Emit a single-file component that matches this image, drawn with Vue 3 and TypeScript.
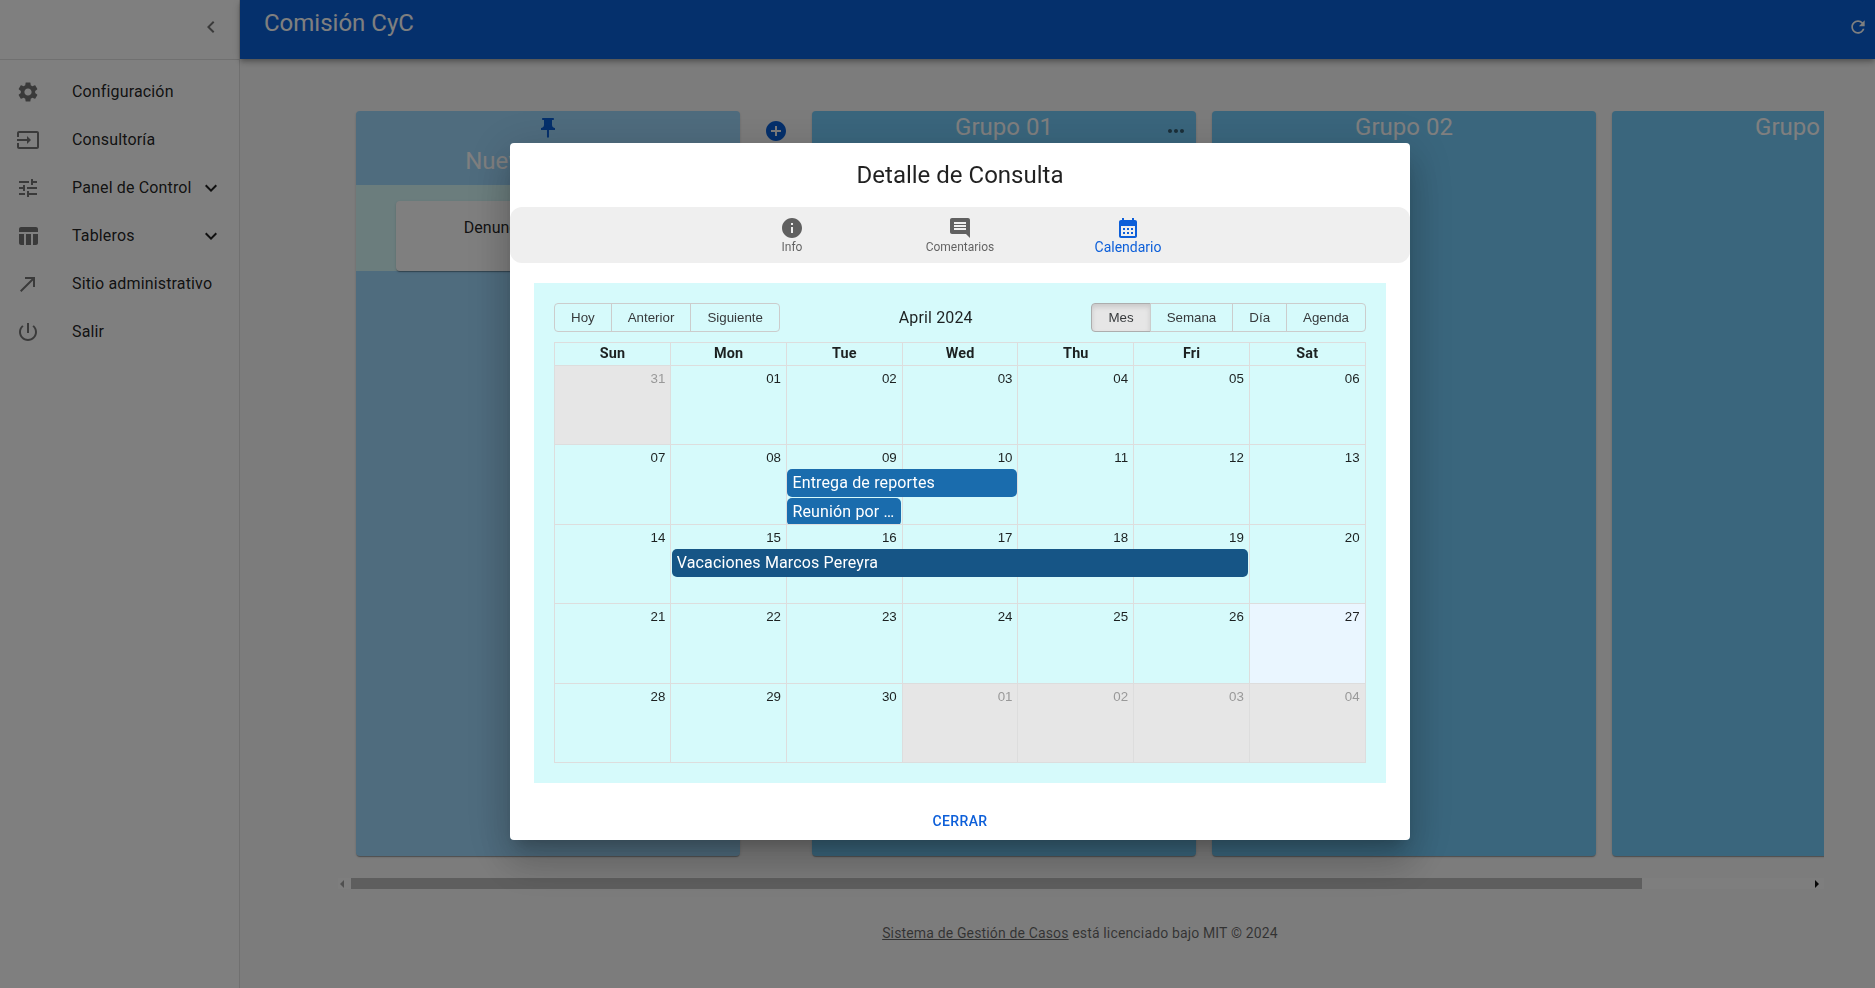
<script setup lang="ts">
import { computed } from 'vue'

const P = {
  settings: 'M19.14 12.94c.04-.3.06-.61.06-.94 0-.32-.02-.64-.07-.94l2.03-1.58c.18-.14.23-.41.12-.61l-1.92-3.32c-.12-.22-.37-.29-.59-.22l-2.39.96c-.5-.38-1.03-.7-1.62-.94l-.36-2.54c-.04-.24-.24-.41-.48-.41h-3.84c-.24 0-.43.17-.47.41l-.36 2.54c-.59.24-1.13.57-1.62.94l-2.39-.96c-.22-.08-.47 0-.59.22L2.74 8.87c-.12.21-.08.47.12.61l2.03 1.58c-.05.3-.09.63-.09.94s.02.64.07.94l-2.03 1.58c-.18.14-.23.41-.12.61l1.92 3.32c.12.22.37.29.59.22l2.39-.96c.5.38 1.03.7 1.62.94l.36 2.54c.05.24.24.41.48.41h3.84c.24 0 .44-.17.47-.41l.36-2.54c.59-.24 1.13-.56 1.62-.94l2.39.96c.22.08.47 0 .59-.22l1.92-3.32c.12-.22.07-.47-.12-.61l-2.01-1.58zM12 15.6c-1.98 0-3.6-1.62-3.6-3.6s1.62-3.6 3.6-3.6 3.6 1.62 3.6 3.6-1.62 3.6-3.6 3.6z',
  input: 'M21 3.01H3c-1.1 0-2 .9-2 2V9h2V4.99h18v14.03H3V15H1v4.01c0 1.1.9 1.98 2 1.98h18c1.1 0 2-.88 2-1.98v-14c0-1.11-.9-2-2-2zM11 16l4-4-4-4v3H1v2h10v3z',
  tune: 'M3 17v2h6v-2H3zM3 5v2h10V5H3zm10 16v-2h8v-2h-8v-2h-2v6h2zM7 9v2H3v2h4v2h2V9H7zm14 4v-2H11v2h10zm-6-4h2V7h4V5h-4V3h-2v6z',
  table: 'M10 10.02h5V21h-5zM17 21h3c1.1 0 2-.9 2-2v-9h-5v11zm3-18H5c-1.1 0-2 .9-2 2v3h19V5c0-1.1-.9-2-2-2zM3 19c0 1.1.9 2 2 2h3V10H3v9z',
  callMade: 'M9 5v2h6.59L4 18.59 5.41 20 17 8.41V15h2V5z',
  power: 'M13 3h-2v10h2V3zm4.83 2.17l-1.42 1.42C17.99 7.86 19 9.81 19 12c0 3.87-3.13 7-7 7s-7-3.13-7-7c0-2.19 1.01-4.14 2.58-5.42L6.17 5.17C4.23 6.82 3 9.26 3 12c0 4.97 4.03 9 9 9s9-4.03 9-9c0-2.74-1.23-5.18-3.17-6.83z',
  expand: 'M16.59 8.59L12 13.17 7.41 8.59 6 10l6 6 6-6z',
  chevronLeft: 'M15.41 7.41L14 6l-6 6 6 6 1.41-1.41L10.83 12z',
  refresh: 'M17.65 6.35C16.2 4.9 14.21 4 12 4c-4.42 0-7.99 3.58-7.99 8s3.57 8 7.99 8c3.73 0 6.84-2.55 7.73-6h-2.08c-.82 2.33-3.04 4-5.65 4-3.31 0-6-2.69-6-6s2.69-6 6-6c1.66 0 3.14.69 4.22 1.78L13 11h7V4l-2.35 2.35z',
  info: 'M12 2C6.48 2 2 6.48 2 12s4.48 10 10 10 10-4.48 10-10S17.52 2 12 2zm1 15h-2v-6h2v6zm0-8h-2V7h2v2z',
  chat: 'M21.99 4c0-1.1-.89-2-1.99-2H4c-1.1 0-2 .9-2 2v12c0 1.1.9 2 2 2h14l4 4-.01-18zM18 14H6v-2h12v2zm0-3H6V9h12v2zm0-3H6V6h12v2z',
  calendar: 'M19 4h-1V2h-2v2H8V2H6v2H5c-1.11 0-1.99.9-1.99 2L3 20c0 1.1.89 2 2 2h14c1.1 0 2-.9 2-2V6c0-1.1-.9-2-2-2zm0 16H5V10h14v10zM9 14H7v-2h2v2zm4 0h-2v-2h2v2zm4 0h-2v-2h2v2zm-8 4H7v-2h2v2zm4 0h-2v-2h2v2zm4 0h-2v-2h2v2z',
  pin: 'M16 9V4h1c.55 0 1-.45 1-1s-.45-1-1-1H7c-.55 0-1 .45-1 1s.45 1 1 1h1v5c0 1.66-1.34 3-3 3v2h5.97v7l1 1 1-1v-7H19v-2c-1.66 0-3-1.34-3-3z',
  add: 'M12 2C6.48 2 2 6.48 2 12s4.48 10 10 10 10-4.48 10-10S17.52 2 12 2zm5 11h-4v4h-2v-4H7v-2h4V7h2v4h4v2z',
  more: 'M6 10c-1.1 0-2 .9-2 2s.9 2 2 2 2-.9 2-2-.9-2-2-2zm12 0c-1.1 0-2 .9-2 2s.9 2 2 2 2-.9 2-2-.9-2-2-2zm-6 0c-1.1 0-2 .9-2 2s.9 2 2 2 2-.9 2-2-.9-2-2-2z',
}

interface NavItem { label: string; icon: string; expandable?: boolean }
const nav: NavItem[] = [
  { label: 'Configuración', icon: P.settings },
  { label: 'Consultoría', icon: P.input },
  { label: 'Panel de Control', icon: P.tune, expandable: true },
  { label: 'Tableros', icon: P.table, expandable: true },
  { label: 'Sitio administrativo', icon: P.callMade },
  { label: 'Salir', icon: P.power },
]

const tabs = [
  { label: 'Info', icon: P.info, active: false },
  { label: 'Comentarios', icon: P.chat, active: false },
  { label: 'Calendario', icon: P.calendar, active: true },
]

const groups = [{ name: 'Grupo 01', more: true }, { name: 'Grupo 02', more: false }, { name: 'Grupo 03', more: false }]

const weekdays = ['Sun', 'Mon', 'Tue', 'Wed', 'Thu', 'Fri', 'Sat']

interface Day { n: string; off: boolean; today: boolean }
interface CalEvent { title: string; col: number; span: number; row: number; dark?: boolean }
interface Week { days: Day[]; events: CalEvent[] }

const pad = (n: number) => String(n).padStart(2, '0')
const weeks = computed<Week[]>(() => {
  const out: Week[] = []
  for (let w = 0; w < 5; w++) {
    const days: Day[] = []
    for (let d = 0; d < 7; d++) {
      const i = w * 7 + d
      const off = i === 0 || i > 30
      const num = i === 0 ? 31 : i > 30 ? i - 30 : i
      days.push({ n: pad(num), off, today: i === 27 })
    }
    out.push({ days, events: [] })
  }
  out[1].events.push({ title: 'Entrega de reportes', col: 3, span: 2, row: 2 })
  out[1].events.push({ title: 'Reunión por videollamada', col: 3, span: 1, row: 3 })
  out[2].events.push({ title: 'Vacaciones Marcos Pereyra', col: 2, span: 5, row: 2, dark: true })
  return out
})
</script>

<template>
  <div class="app">
    <aside class="sidebar">
      <div class="side-top">
        <svg class="ico chev" viewBox="0 0 24 24"><path :d="P.chevronLeft" /></svg>
      </div>
      <ul class="nav">
        <li v-for="item in nav" :key="item.label" class="nav-item">
          <svg class="ico nav-ico" viewBox="0 0 24 24"><path :d="item.icon" /></svg>
          <span class="nav-label">{{ item.label }}</span>
          <svg v-if="item.expandable" class="ico nav-exp" viewBox="0 0 24 24"><path :d="P.expand" /></svg>
        </li>
      </ul>
    </aside>

    <div class="main">
      <header class="topbar">
        <h1 class="brand">Comisión CyC</h1>
        <svg class="ico refresh" viewBox="0 0 24 24"><path :d="P.refresh" /></svg>
      </header>

      <div class="content">
        <div class="board">
          <section class="column first">
            <svg class="ico pin" viewBox="0 0 24 24"><path :d="P.pin" /></svg>
            <h2 class="col-title first-title">Nuevas Causas</h2>
            <div class="strip">
              <div class="card">Denuncia de corrupción</div>
            </div>
          </section>
          <div class="add-slot">
            <svg class="ico add" viewBox="0 0 24 24"><path :d="P.add" /></svg>
          </div>
          <section v-for="g in groups" :key="g.name" class="column">
            <h2 class="col-title">{{ g.name }}</h2>
            <svg v-if="g.more" class="ico more" viewBox="0 0 24 24"><path :d="P.more" /></svg>
          </section>
        </div>

        <div class="scrollbar">
          <span class="arrow left"></span>
          <span class="thumb"></span>
          <span class="arrow right"></span>
        </div>

        <footer class="foot"><a class="foot-link">Sistema de Gestión de Casos</a> está licenciado bajo MIT © 2024</footer>
      </div>
    </div>

    <div class="scrim">
      <div class="dialog">
        <h2 class="dlg-title">Detalle de Consulta</h2>
        <nav class="tabs">
          <div v-for="t in tabs" :key="t.label" class="tab" :class="{ active: t.active }">
            <svg class="ico tab-ico" viewBox="0 0 24 24"><path :d="t.icon" /></svg>
            <span class="tab-label">{{ t.label }}</span>
          </div>
        </nav>

        <div class="panel">
          <div class="toolbar">
            <div class="btn-group">
              <button class="tb-btn">Hoy</button>
              <button class="tb-btn">Anterior</button>
              <button class="tb-btn">Siguiente</button>
            </div>
            <span class="tb-label">April 2024</span>
            <div class="btn-group">
              <button class="tb-btn on">Mes</button>
              <button class="tb-btn">Semana</button>
              <button class="tb-btn">Día</button>
              <button class="tb-btn">Agenda</button>
            </div>
          </div>

          <div class="month">
            <div class="head-row">
              <div v-for="d in weekdays" :key="d" class="head-cell">{{ d }}</div>
            </div>
            <div v-for="(w, wi) in weeks" :key="wi" class="week">
              <div
                v-for="(d, di) in w.days"
                :key="di"
                class="day"
                :class="{ off: d.off, today: d.today }"
                :style="{ gridColumn: di + 1 }"
              >
                <span class="day-num">{{ d.n }}</span>
              </div>
              <div
                v-for="e in w.events"
                :key="e.title"
                class="event"
                :class="{ dark: e.dark }"
                :style="{ gridColumn: `${e.col} / span ${e.span}`, gridRow: e.row }"
              >
                {{ e.title }}
              </div>
            </div>
          </div>
        </div>

        <div class="actions">
          <button class="close">CERRAR</button>
        </div>
      </div>
    </div>
  </div>
</template>

<style scoped>
.app {
  display: flex;
  width: 1875px;
  height: 988px;
  overflow: hidden;
  background: #f9f9f9;
  font-family: Roboto, "Liberation Sans", sans-serif;
  font-size: 16px;
  line-height: 1.5;
  letter-spacing: 0.15px;
  color: rgba(0, 0, 0, 0.87);
}
.ico { display: block; width: 24px; height: 24px; fill: currentColor; flex: none; }

/* sidebar */
.sidebar {
  width: 240px;
  flex: none;
  box-sizing: border-box;
  background: #fff;
  border-right: 1px solid rgba(0, 0, 0, 0.12);
}
.side-top {
  height: 60px;
  box-sizing: border-box;
  border-bottom: 1px solid rgba(0, 0, 0, 0.12);
  display: flex;
  align-items: center;
  justify-content: flex-end;
  padding: 0 16px 6px 0;
}
.chev { color: rgba(0, 0, 0, 0.54); }
.nav { list-style: none; margin: 0; padding: 8px 0; }
.nav-item {
  height: 48px;
  display: flex;
  align-items: center;
  padding: 0 16px;
}
.nav-ico { color: rgba(0, 0, 0, 0.54); margin-right: 32px; }
.nav-label { flex: 1; white-space: nowrap; }
.nav-exp { color: rgba(0, 0, 0, 0.87); }

/* main */
.main { flex: 1; min-width: 0; display: flex; flex-direction: column; }
.topbar {
  height: 59px;
  flex: none;
  box-sizing: border-box;
  background: #0a60d8;
  color: #fff;
  display: flex;
  justify-content: space-between;
  padding: 5px 7px 0 24px;
  box-shadow: 0 2px 4px -1px rgba(0, 0, 0, 0.2), 0 4px 5px 0 rgba(0, 0, 0, 0.14), 0 1px 10px 0 rgba(0, 0, 0, 0.12);
  position: relative;
}
.brand { margin: 0; font-size: 24px; font-weight: 400; line-height: 36px; letter-spacing: 0; }
.refresh { width: 20px; height: 20px; margin-top: 12px; }

.content { flex: 1; min-height: 0; padding: 52px 51px 0 98px; display: flex; flex-direction: column; }
.board {
  display: flex;
  height: 767px;
  flex: none;
  overflow: hidden;
  padding: 0 0 22px 18px;
  box-sizing: border-box;
}
.column {
  width: 384px;
  flex: none;
  margin-right: 16px;
  position: relative;
  background: #74ccfa;
  border-radius: 4px;
  box-shadow: 0 2px 1px -1px rgba(0, 0, 0, 0.2), 0 1px 1px 0 rgba(0, 0, 0, 0.14), 0 1px 3px 0 rgba(0, 0, 0, 0.12);
}
.column.first { background: #9ed8fd; margin-right: 0; }
.col-title {
  margin: 0;
  text-align: center;
  font-size: 24px;
  font-weight: 400;
  line-height: 32px;
  letter-spacing: 0;
  color: #fff;
}
.pin { margin: 5px auto 0; color: #0a60d8; }
.first-title { margin-top: 3px; height: 42px; line-height: 36px; }
.strip { height: 86px; background: #d6fafb; padding: 16px 40px 0; box-sizing: border-box; }
.card {
  height: 70px;
  box-sizing: border-box;
  background: #fff;
  border-radius: 4px;
  text-align: center;
  letter-spacing: 0;
  padding-top: 15px;
  box-shadow: 0 2px 1px -1px rgba(0, 0, 0, 0.2), 0 1px 1px 0 rgba(0, 0, 0, 0.14), 0 1px 3px 0 rgba(0, 0, 0, 0.12);
}
.add-slot { width: 72px; flex: none; display: flex; justify-content: center; padding-top: 8px; box-sizing: border-box; }
.add { color: #0a60d8; }
.more { position: absolute; top: 8px; right: 8px; color: rgba(0, 0, 0, 0.54); }

.scrollbar {
  height: 11px;
  flex: none;
  display: flex;
  align-items: center;
  background: #fdfdfd;
}
.arrow { width: 0; height: 0; border-style: solid; border-color: transparent; flex: none; }
.arrow.left { border-width: 4px 4px 4px 0; border-right-color: #a0a0a0; margin: 0 7px 0 2px; }
.arrow.right { border-width: 4px 0 4px 4px; border-left-color: #111; margin: 0 5px 0 auto; }
.thumb { width: 1291px; height: 11px; background: #bdbdbd; flex: none; }

.foot { margin-top: 33px; padding-right: 2px; text-align: center; font-size: 14px; line-height: 22px; color: rgba(0, 0, 0, 0.6); }
.foot-link { text-decoration: underline; }

/* modal */
.scrim {
  position: fixed;
  inset: 0;
  background: rgba(0, 0, 0, 0.5);
}
.dialog {
  position: absolute;
  left: 510px;
  top: 143px;
  width: 900px;
  height: 697px;
  box-sizing: border-box;
  background: #fff;
  border-radius: 4px;
  box-shadow: 0 11px 15px -7px rgba(0, 0, 0, 0.2), 0 24px 38px 3px rgba(0, 0, 0, 0.14), 0 9px 46px 8px rgba(0, 0, 0, 0.12);
  display: flex;
  flex-direction: column;
}
.dlg-title {
  margin: 0;
  height: 64px;
  flex: none;
  font-size: 24px;
  font-weight: 400;
  line-height: 64px;
  letter-spacing: 0;
  text-align: center;
}
.tabs {
  height: 56px;
  flex: none;
  background: #efefef;
  border-radius: 12px;
  display: flex;
  justify-content: center;
}
.tab {
  width: 168px;
  box-sizing: border-box;
  padding-top: 9px;
  display: flex;
  flex-direction: column;
  align-items: center;
  color: rgba(0, 0, 0, 0.6);
}
.tab-label { font-size: 12px; line-height: 16px; margin-top: -1px; letter-spacing: 0; }
.tab.active { color: #0d5fd9; }
.tab.active .tab-label { font-size: 14px; }

.panel {
  margin: 20px 24px 0;
  height: 500px;
  flex: none;
  box-sizing: border-box;
  padding: 20px;
  background: #d6fafb;
  display: flex;
  flex-direction: column;
}
.toolbar { display: flex; align-items: center; margin-bottom: 10px; flex: none; }
.tb-label { flex: 1; text-align: center; padding: 0 10px; }
.btn-group { display: inline-flex; white-space: nowrap; }
.tb-btn {
  font-family: "Liberation Sans", Arial, sans-serif;
  font-size: 13.333px;
  line-height: normal;
  color: #373a3c;
  background: none;
  border: 1px solid #ccc;
  padding: 6px 16px;
  margin: 0 0 0 -1px;
  border-radius: 0;
}
.tb-btn:first-child { margin-left: 0; border-radius: 4px 0 0 4px; }
.tb-btn:last-child { border-radius: 0 4px 4px 0; }
.tb-btn.on { background: #e6e6e6; border-color: #adadad; box-shadow: inset 0 3px 5px rgba(0, 0, 0, 0.125); }

.month {
  flex: 1;
  min-height: 0;
  border: 1px solid #ddd;
  display: flex;
  flex-direction: column;
}
.head-row {
  display: grid;
  grid-template-columns: repeat(7, 1fr);
  flex: none;
  height: 23px;
  margin: 0 0.4px 0 -0.4px;
}
.head-cell {
  text-align: center;
  font-size: 14.4px;
  font-weight: 700;
  line-height: 22px;
  border-bottom: 1px solid #ddd;
  color: rgba(0, 0, 0, 0.87);
}
.head-cell + .head-cell { border-left: 1px solid #ddd; }
.week {
  flex: 1;
  min-height: 0;
  display: grid;
  grid-template-columns: repeat(7, 1fr);
  grid-template-rows: 24px 29px 1fr;
  overflow: hidden;
  margin: 0 0.4px 0 -0.4px;
}
.week + .week { border-top: 1px solid #ddd; }
.day {
  grid-row: 1 / -1;
  text-align: right;
  padding-right: 5px;
  min-width: 0;
}
.day + .day { border-left: 1px solid #ddd; }
.day.off { background: #e6e6e6; color: #999; }
.day.today { background: #eaf6ff; }
.day-num {
  font-family: "Liberation Sans", Arial, sans-serif;
  font-size: 13.333px;
  letter-spacing: 0;
  line-height: 26px;
  display: block;
}
.event {
  margin: 0 0.6px 0 1.4px;
  height: 28px;
  box-sizing: border-box;
  padding: 2px 5px;
  min-width: 0;
  border-radius: 5px;
  background: #1a6cad;
  color: #fff;
  white-space: nowrap;
  overflow: hidden;
  text-overflow: ellipsis;
}
.event.dark { background: #165586; }

.actions { flex: 1; display: flex; justify-content: center; padding-top: 20px; box-sizing: border-box; }
.close {
  height: 36px;
  padding: 0 8px;
  background: none;
  border: 0;
  font-family: Roboto, sans-serif;
  font-size: 14px;
  font-weight: 500;
  letter-spacing: 0.4px;
  color: #0d5fd9;
}
</style>
